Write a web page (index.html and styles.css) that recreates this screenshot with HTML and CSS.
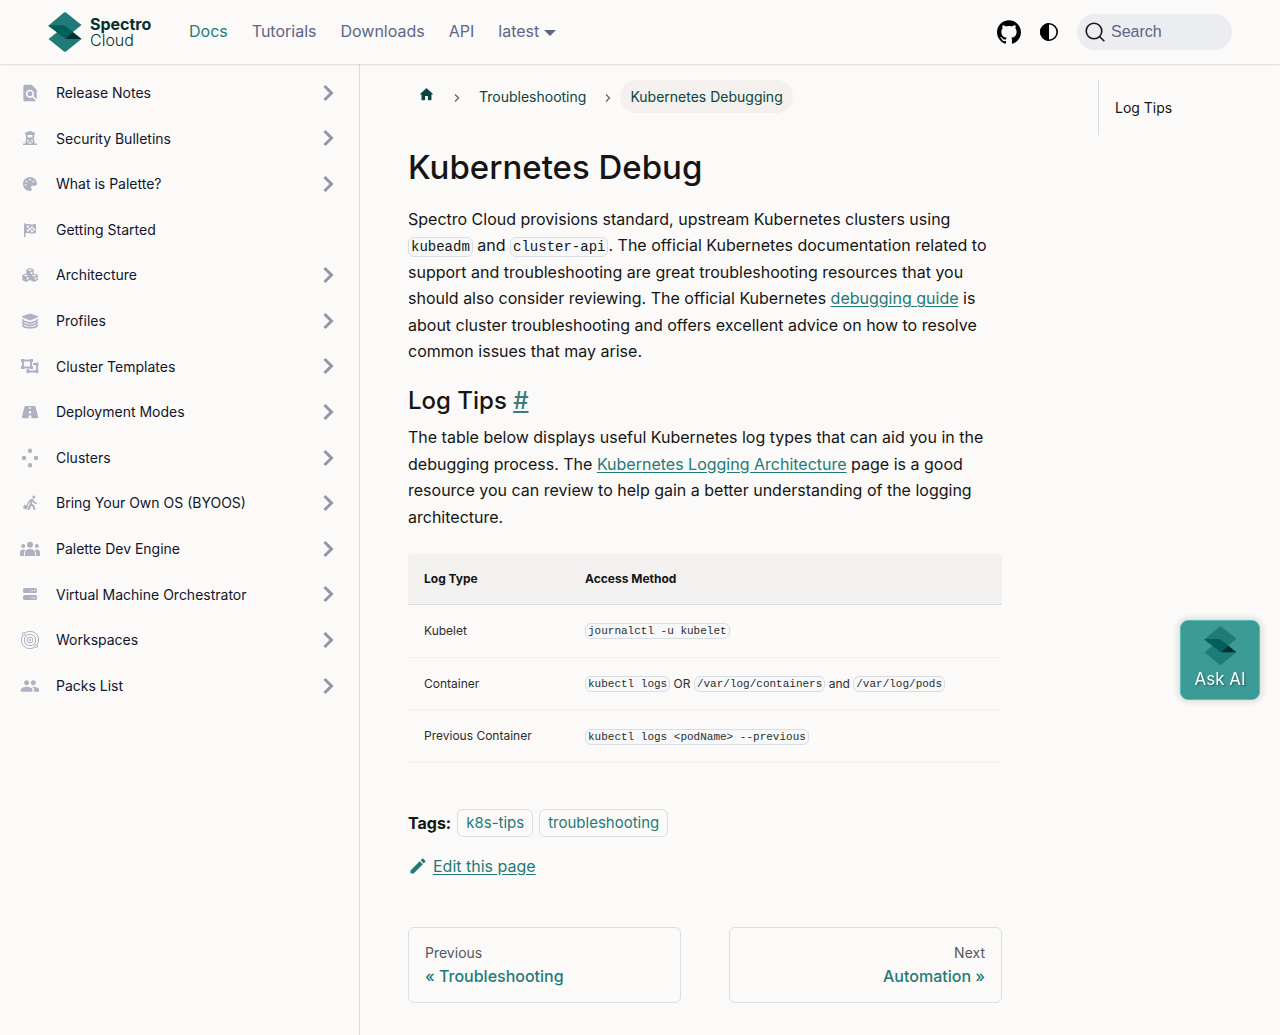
FILE: index.html
```html
<!DOCTYPE html>
<html lang="en">
<head>
<meta charset="utf-8">
<meta name="viewport" content="width=device-width, initial-scale=1">
<title>Kubernetes Debug | Palette</title>
<link rel="stylesheet" href="styles.css">
</head>
<body>
<svg class="sprite" aria-hidden="true">
  <symbol id="mark" viewBox="0 0 34 40">
    <path fill="#1f7a78" d="M16 .6a2 2 0 0 1 2 0L33.500 13 17.500 26 .5 13.500z"/>
    <path fill="#1f7a78" d="M.5 27 10 19.500h14L33.500 27 18 39.500a2 2 0 0 1-2 0z"/>
    <path fill="#005f5b" d="M.5 13.300H14q2 0 3.500 1l7.500 6L17.500 27 .5 14z"/>
    <path fill="#04302f" d="M25 20.300 33.500 27H17.500z"/>
  </symbol>
  <symbol id="chevron" viewBox="0 0 20 20"><path d="M5.500 3 12.500 10l-7 7" fill="none" stroke="currentColor" stroke-width="3"/></symbol>
  <symbol id="crumb" viewBox="0 0 8 10"><path d="M2 2.500 5.500 6 2 9.500" fill="none" stroke="currentColor" stroke-width="1.300"/></symbol>
</svg>

<header class="navbar">
  <a class="brand" href="#">
    <svg class="brand-mark" aria-hidden="true"><use href="#mark"/></svg>
    <span class="brand-name"><b>Spectro</b><span>Cloud</span></span>
  </a>
  <nav class="nav-links" aria-label="Main">
    <a class="active" href="#">Docs</a>
    <a href="#">Tutorials</a>
    <a href="#">Downloads</a>
    <a href="#">API</a>
    <a class="dropdown" href="#">latest</a>
  </nav>
  <div class="nav-tools">
    <a class="github" href="#" aria-label="GitHub"><svg width="24" height="24" viewBox="0 0 24 24" aria-hidden="true"><path d="M12 .297c-6.630 0-12 5.373-12 12 0 5.303 3.438 9.800 8.205 11.385.6.113.82-.258.82-.577 0-.285-.01-1.040-.015-2.040-3.338.724-4.042-1.610-4.042-1.610C4.422 18.070 3.633 17.700 3.633 17.700c-1.087-.744.084-.729.084-.729 1.205.084 1.838 1.236 1.838 1.236 1.070 1.835 2.809 1.305 3.495.998.108-.776.417-1.305.76-1.605-2.665-.3-5.466-1.332-5.466-5.930 0-1.310.465-2.380 1.235-3.220-.135-.303-.54-1.523.105-3.176 0 0 1.005-.322 3.300 1.230.96-.267 1.980-.399 3-.405 1.020.006 2.040.138 3 .405 2.280-1.552 3.285-1.230 3.285-1.230.645 1.653.24 2.873.12 3.176.765.84 1.230 1.910 1.230 3.220 0 4.610-2.805 5.625-5.475 5.920.42.36.81 1.096.81 2.220 0 1.606-.015 2.896-.015 3.286 0 .315.21.69.825.57C20.565 22.092 24 17.592 24 12.297c0-6.627-5.373-12-12-12"/></svg></a>
    <button class="theme" type="button" aria-label="Switch theme"><svg width="20" height="20" viewBox="0 0 20 20" aria-hidden="true"><circle cx="10" cy="10" r="8.200" fill="none" stroke="currentColor" stroke-width="1.600"/><path d="M10 1a9 9 0 0 0 0 18z"/></svg></button>
    <label class="search">
      <svg width="20" height="20" viewBox="0 0 20 20" fill="none" stroke="currentColor" stroke-width="1.600" aria-hidden="true"><circle cx="9" cy="9" r="7.800"/><path d="m14.500 14.500 4.800 4.800"/></svg>
      <input type="search" placeholder="Search" aria-label="Search">
    </label>
  </div>
</header>

<div class="layout">
  <nav class="sidebar" aria-label="Docs sidebar">
    <ul>
      <li><a href="#"><svg class="icon" viewBox="0 0 24 24"><path d="M20 19.590V8l-6-6H6c-1.100 0-1.990.9-1.990 2L4 20c0 1.100.89 2 1.990 2H18c.45 0 .85-.15 1.190-.4l-4.430-4.430c-.8.52-1.740.83-2.760.83-2.760 0-5-2.240-5-5s2.240-5 5-5 5 2.240 5 5c0 1.020-.31 1.960-.83 2.750L20 19.590zM9 13c0 1.660 1.340 3 3 3s3-1.340 3-3-1.340-3-3-3-3 1.340-3 3z"/></svg>Release Notes<svg class="chev"><use href="#chevron"/></svg></a></li>
      <li><a href="#"><svg class="icon" viewBox="0 0 20 20"><path fill-rule="evenodd" d="M9.500 3h1L15 4.800V6.500h-.7L13.800 10h.2v1l.7 4.500H17V17H3v-1.500h2.300L6 11v-1h.2L5.700 6.500H5V4.800zM7.500 7l.2 2.500h4.600l.2-2.500zM7.600 11l1.600 1.600L7 14.800zm4.800 0-1.600 1.600 2.200 2.200zM10 13.500l-2 2h4z"/></svg>Security Bulletins<svg class="chev"><use href="#chevron"/></svg></a></li>
      <li><a href="#"><svg class="icon" viewBox="-110 -110 732 732"><path d="M512 256c0 .9 0 1.800 0 2.700c-.4 36.500-33.600 61.300-70.100 61.300H344c-26.500 0-48 21.500-48 48c0 3.400 .4 6.700 1 9.900c2.100 10.200 6.500 20 10.800 29.900c6.100 13.800 12.100 27.500 12.100 42c0 31.800-21.600 60.700-53.400 62c-3.500 .1-7 .2-10.600 .2C114.600 512 0 397.400 0 256S114.600 0 256 0S512 114.600 512 256zM128 288a32 32 0 1 0 -64 0 32 32 0 1 0 64 0zm0-96a32 32 0 1 0 0-64 32 32 0 1 0 0 64zM288 96a32 32 0 1 0 -64 0 32 32 0 1 0 64 0zm96 96a32 32 0 1 0 0-64 32 32 0 1 0 0 64z"/></svg>What is Palette?<svg class="chev"><use href="#chevron"/></svg></a></li>
      <li><a href="#"><svg class="icon" viewBox="0 0 20 20"><path fill-rule="evenodd" d="M4 3.300h1.500V4.500c3-1.300 4 1.200 10.500-.7v9c-5 2.200-7-.8-10.500.8V17H4zM7 5.500v2l2 .2v-2zm4 .8v2l2 .2v-2zM9 7.700v2l2 .5v-2zm4 .8v2l2-.3v-2zM7 9.500v2l2-.1v-2zm4 .8v2l2 .2v-2z"/></svg>Getting Started</a></li>
      <li><a href="#"><svg class="icon" viewBox="0 0 20 20"><path fill-rule="evenodd" d="m10 3 3.700 1.400v4L17.800 10v5L14 17l-4-1.900L6 17l-3.800-2v-5l4.100-1.600v-4zm0 1.200L7.700 5 10 5.900l2.300-.9zm.7 3v2.200l1.800-.8V6.400zM6 9.800l-2.300.8L6 11.500l2.300-.9zm.7 3V15l1.800-.9v-2.200zM14 9.800l-2.300.8 2.300.9 2.300-.9zm.7 3V15l1.800-.9v-2.200z"/></svg>Architecture<svg class="chev"><use href="#chevron"/></svg></a></li>
      <li><a href="#"><svg class="icon" viewBox="0 0 20 20"><path d="m10 2.600 7.500 2.400q1 .5 0 1.400L10 9.500 2.500 6.400q-1-.9 0-1.400z"/><path fill="none" stroke="currentColor" stroke-width="1.700" d="M2.200 8.200 4 10.200l6 1.800 6-1.800 1.800-2M2 11l2 2 6 1.500 6-1.500 2-2M2.200 13.800l2.300 2.300 5.500.8 5.500-.8 2.300-2.300"/></svg>Profiles<svg class="chev"><use href="#chevron"/></svg></a></li>
      <li><a href="#"><svg class="icon" viewBox="0 0 20 20"><path fill="none" stroke="currentColor" stroke-width="1.900" d="M3 4.500h8v7H3zM13 8h4v7.500H8V13"/><path d="M1 3h3v3H1zm9 0h3v3h-3zm-9 7h3v3H1zm9 0h3v3h-3zm5.500-3.500h3v3h-3zm0 7.500h3v3h-3zM6.500 14h3v3h-3z"/></svg>Cluster Templates<svg class="chev"><use href="#chevron"/></svg></a></li>
      <li><a href="#"><svg class="icon" viewBox="0 0 20 20"><path fill-rule="evenodd" d="M5.500 4h9q.8 0 1 .8L18 14.600q.3 1.600-1.200 1.600H3.200q-1.500 0-1.200-1.600L4.500 4.800q.2-.8 1-.8zm3.800 1-.1 2h1.600l-.1-2zM9 9l-.2 2.500h2.400L11 9zm-.3 4.500-.1 2.700h2.800l-.1-2.700z"/></svg>Deployment Modes<svg class="chev"><use href="#chevron"/></svg></a></li>
      <li><a href="#"><svg class="icon" viewBox="0 0 20 20"><circle cx="10" cy="2.800" r="2.200"/><circle cx="4" cy="10" r="2.200"/><circle cx="16" cy="10" r="2.200"/><circle cx="10" cy="17.200" r="2.200"/></svg>Clusters<svg class="chev"><use href="#chevron"/></svg></a></li>
      <li><a href="#"><svg class="icon" viewBox="0 0 20 20"><circle cx="13.800" cy="4" r="1.500"/><path d="m4.500 11.500 3.700 1.800-1.700 3.500-3.700-1.700z"/><path fill="none" stroke="currentColor" stroke-width="1.500" stroke-linecap="round" stroke-linejoin="round" d="m7.500 12 2-4 3-1.500 1.500 2.800 2.300 1"/><path fill="none" stroke="currentColor" stroke-width="2" stroke-linecap="round" stroke-linejoin="round" d="m12 7-1.300 4 2.800 2 .8 3M10.500 12 8.800 16"/></svg>Bring Your Own OS (BYOOS)<svg class="chev"><use href="#chevron"/></svg></a></li>
      <li><a href="#"><svg class="icon" viewBox="0 0 20 20"><circle cx="10" cy="5.800" r="3"/><circle cx="3.200" cy="7" r="2"/><circle cx="16.800" cy="7" r="2"/><path d="M5 17v-2.500Q5 10 10 10t5 4.500V17zM0 17v-3q0-3.500 3.200-3.500 1.200 0 2 .7Q4 12.800 4 15v2zm20 0v-3q0-3.500-3.200-3.500-1.200 0-2 .7Q16 12.800 16 15v2z"/></svg>Palette Dev Engine<svg class="chev"><use href="#chevron"/></svg></a></li>
      <li><a href="#"><svg class="icon" viewBox="0 0 20 20"><path fill-rule="evenodd" d="M4.500 4h11Q17 4 17 5.500v2Q17 9 15.500 9h-11Q3 9 3 7.500v-2Q3 4 4.500 4zm7 2v1.200h1.200V6zm2.500 0v1.200h1.200V6zM4.500 11h11q1.500 0 1.500 1.500v2q0 1.500-1.500 1.500h-11Q3 16 3 14.500v-2Q3 11 4.500 11zm7 2v1.200h1.200V13zm2.500 0v1.200h1.200V13z"/></svg>Virtual Machine Orchestrator<svg class="chev"><use href="#chevron"/></svg></a></li>
      <li><a href="#"><svg class="icon outline" viewBox="0 0 20 20"><path d="M5.500 2.700a8.500 8.500 0 0 1 11.800 11.700M14.500 17.300A8.500 8.500 0 0 1 2.700 5.600"/><circle cx="10" cy="10" r="5.700"/><circle cx="10" cy="10" r="2.800"/><circle cx="10" cy="10" r=".7"/><circle cx="3.800" cy="4" r="1.500"/><circle cx="16.200" cy="16" r="1.500"/></svg>Workspaces<svg class="chev"><use href="#chevron"/></svg></a></li>
      <li><a href="#"><svg class="icon" viewBox="0 0 24 24"><path d="M16 11c1.660 0 2.990-1.340 2.990-3S17.660 5 16 5c-1.660 0-3 1.340-3 3s1.340 3 3 3zm-8 0c1.660 0 2.990-1.340 2.990-3S9.660 5 8 5C6.340 5 5 6.340 5 8s1.340 3 3 3zm0 2c-2.330 0-7 1.170-7 3.500V19h14v-2.500c0-2.330-4.670-3.500-7-3.500zm8 0c-.29 0-.62.02-.97.05 1.160.84 1.970 1.970 1.970 3.450V19h6v-2.500c0-2.330-4.670-3.500-7-3.500z"/></svg>Packs List<svg class="chev"><use href="#chevron"/></svg></a></li>
    </ul>
  </nav>

  <main class="page">
    <div class="doc">
      <nav class="breadcrumbs" aria-label="Breadcrumbs">
        <a class="home" href="#" aria-label="Home"><svg viewBox="0 0 24 24" aria-hidden="true"><path d="M10 19v-5h4v5c0 .55.45 1 1 1h3c.55 0 1-.45 1-1v-7h1.700c.46 0 .68-.57.33-.87L12.670 3.600c-.38-.34-.96-.34-1.340 0l-8.360 7.530c-.34.3-.13.87.33.87H5v7c0 .55.45 1 1 1h3c.55 0 1-.45 1-1z"/></svg></a>
        <svg class="sep"><use href="#crumb"/></svg>
        <a href="#">Troubleshooting</a>
        <svg class="sep"><use href="#crumb"/></svg>
        <span class="current">Kubernetes Debugging</span>
      </nav>
      <article>
        <h1>Kubernetes Debug</h1>
        <p>Spectro Cloud provisions standard, upstream Kubernetes clusters using <code>kubeadm</code> and <code>cluster-api</code>. The official Kubernetes documentation related to support and troubleshooting are great troubleshooting resources that you should also consider reviewing. The official Kubernetes <a href="#">debugging guide</a> is about cluster troubleshooting and offers excellent advice on how to resolve common issues that may arise.</p>
        <h2 id="log-tips">Log Tips <a href="#log-tips">#</a></h2>
        <p>The table below displays useful Kubernetes log types that can aid you in the debugging process. The <a href="#">Kubernetes Logging Architecture</a> page is a good resource you can review to help gain a better understanding of the logging architecture.</p>
        <table>
          <thead><tr><th class="type">Log Type</th><th>Access Method</th></tr></thead>
          <tbody>
            <tr><td>Kubelet</td><td><code>journalctl -u kubelet</code></td></tr>
            <tr><td>Container</td><td><code>kubectl logs</code> OR <code>/var/log/containers</code> and <code>/var/log/pods</code></td></tr>
            <tr><td>Previous Container</td><td><code>kubectl logs &lt;podName&gt; --previous</code></td></tr>
          </tbody>
        </table>
      </article>
      <footer>
        <div class="tags"><b>Tags:</b><a href="#">k8s-tips</a><a href="#">troubleshooting</a></div>
        <a class="edit" href="#"><svg width="20" height="20" viewBox="0 0 40 40" aria-hidden="true"><path d="m34.500 11.700l-3 3.100-6.300-6.300 3.100-3q0.500-0.500 1.200-0.500t1.100 0.500l3.900 3.900q0.500 0.400 0.500 1.100t-0.500 1.200z m-29.500 17.100l18.400-18.500 6.300 6.300-18.400 18.400h-6.300v-6.200z"/></svg><span>Edit this page</span></a>
      </footer>
      <nav class="pagination" aria-label="Docs pages">
        <a href="#"><small>Previous</small><span>« Troubleshooting</span></a>
        <a class="next" href="#"><small>Next</small><span>Automation »</span></a>
      </nav>
    </div>
    <aside class="toc"><a href="#log-tips">Log Tips</a></aside>
  </main>
</div>

<button class="ask" type="button"><svg class="ask-mark" aria-hidden="true"><use href="#mark"/></svg>Ask AI</button>
</body>
</html>
```
FILE: styles.css
```css
* { box-sizing: border-box; }

body {
  margin: 0;
  background: #fbfaf8;
  color: #151515;
  font: 16px/1.65 Inter, "Liberation Sans", sans-serif;
}

a { color: #1f7a78; text-underline-offset: 2px; }
ul { list-style: none; margin: 0; padding: 0; }
button { font: inherit; cursor: pointer; }
.sprite { position: absolute; width: 0; height: 0; }

/* Top bar */
.navbar {
  position: sticky;
  top: 0;
  z-index: 2;
  display: flex;
  align-items: center;
  height: 64px;
  padding: 0 48px;
  background: #fbfaf8;
  box-shadow: 0 1px 2px rgba(0, 0, 0, .12);
}
.navbar a { text-decoration: none; }
.brand { display: flex; align-items: center; gap: 8px; width: 141px; color: #04302f; }
.brand-mark { width: 34px; height: 40px; }
.brand-name { display: grid; font-size: 16px; line-height: 16px; }
.brand-name b { font-weight: 700; }
.brand-name span { font-weight: 300; }
.nav-links { display: flex; gap: 24px; padding-bottom: 2px; line-height: 24px; }
.nav-links a { color: #5d6588; }
.nav-links .active { color: #1f7a78; }
.dropdown::after {
  content: "";
  display: inline-block;
  margin-left: 5px;
  vertical-align: 1px;
  border: 6px solid transparent;
  border-top-color: currentColor;
  border-bottom: 0;
}
.nav-tools { display: flex; align-items: center; gap: 18px; margin-left: auto; }
.github, .theme { display: flex; color: #000; }
.theme { padding: 0; border: 0; background: none; }
.search {
  display: flex;
  align-items: center;
  gap: 6px;
  width: 155px;
  height: 36px;
  padding: 0 8px;
  border-radius: 18px;
  background: #ebedf0;
}
.search svg { flex: none; }
.search input {
  width: 100%;
  min-width: 0;
  padding: 0;
  border: 0;
  background: none;
  font: 16px "Liberation Sans", sans-serif;
}
.search input::placeholder { color: #5d6588; opacity: 1; }

/* Page columns */
.layout { display: grid; grid-template-columns: 360px minmax(0, 1fr); min-height: calc(100vh - 64px); }
.sidebar { padding: 8px; border-right: 1px solid #dadbe4; }
.sidebar li { margin-bottom: 4px; }
.sidebar a {
  display: flex;
  align-items: center;
  padding: 11px 12px;
  color: #10152e;
  font-size: 14px;
  line-height: 1.4;
  text-decoration: none;
}
.sidebar svg { margin-block: -1px; }
.icon { width: 20px; height: 20px; margin-right: 16px; fill: currentColor; color: #adb1c2; }
.outline { fill: none; stroke: currentColor; }
.chev { width: 20px; height: 20px; margin-left: auto; color: #9396a9; }

.page {
  display: grid;
  grid-template-columns: minmax(0, 1fr) 134px;
  gap: 96px;
  align-items: start;
  padding: 16px 48px 32px;
}
.toc { padding: 17px 16px 16px; border-left: 1px solid #dadbe4; font-size: 14px; line-height: 22px; }
.toc a { color: #151515; text-decoration: none; }

/* Article */
.breadcrumbs { display: flex; align-items: center; gap: 8px; font-size: 14px; line-height: 17px; }
.breadcrumbs a, .current { padding: 8px 10px; border-radius: 17px; color: #0b4442; text-decoration: none; }
.breadcrumbs .current { background: #f3f0ed; }
.breadcrumbs .home { padding: 6px 10px 10px; }
.home svg { display: block; width: 17px; height: 17px; fill: currentColor; }
.sep { width: 8px; height: 10px; color: #666; }

h1 { margin: 32px 0 17px; font-size: 33px; line-height: 44px; font-weight: 500; }
h2 { margin: 0 0 7px; font-size: 24px; line-height: 32px; font-weight: 500; }
h2 a { color: #3b7b78; }
p { margin: 0 0 24px; }
h1 + p { margin-bottom: 21px; }
code {
  padding: 1px 2px;
  border: 1px solid #dadde1;
  border-radius: 6px;
  background: #f6f8fa;
  font: 14px "Liberation Mono", monospace;
  vertical-align: middle;
}
table { width: 100%; border-collapse: collapse; font-size: 12px; color: #2c2c2c; }
table code { font-size: 11px; }
th, td { padding: 16px; text-align: left; border-bottom: 1px solid #f1f0ee; }
th { padding-block: 15px; background: #f2f1ef; border-color: #dadada; color: #151515; font-weight: 700; }
th:first-child { border-top-left-radius: 4px; }
th:last-child { border-top-right-radius: 4px; }
.type { width: 161px; }

.tags { display: flex; align-items: center; margin-top: 46px; gap: 6px; }
.tags a {
  padding: 2px 8px;
  border: 1px solid #dadde1;
  border-radius: 6px;
  font-size: 15px;
  line-height: 22px;
  text-decoration: none;
}
.edit { display: flex; align-items: center; gap: 5px; width: fit-content; margin-top: 16px; text-decoration: none; }
.edit span { text-decoration: underline; }
.edit svg { fill: currentColor; }

.pagination { display: grid; grid-template-columns: 1fr 1fr; gap: 48px; margin-top: 48px; }
.pagination a {
  display: grid;
  gap: 2px;
  padding: 16px 16px 14px;
  border: 1px solid #dadde1;
  border-radius: 6px;
  line-height: 24px;
  font-weight: 500;
  text-decoration: none;
}
.pagination small { font-size: 14px; line-height: 18px; font-weight: 400; color: #525860; }
.next { text-align: right; }

/* Floating assistant button */
.ask {
  position: fixed;
  right: 20px;
  bottom: 335px;
  display: grid;
  justify-items: center;
  align-content: start;
  gap: 2px;
  width: 80px;
  height: 80px;
  padding: 5px 0 0;
  border: 1px solid #57bdb6;
  border-radius: 8px;
  background: #3c9b97;
  box-shadow: 0 0 8px rgba(0, 0, 0, .2);
  color: #fff;
  font-size: 17px;
  line-height: 24px;
  text-shadow: 1px 1px 2px rgba(0, 0, 0, .4);
}
.ask-mark { width: 33px; height: 39px; }
```
